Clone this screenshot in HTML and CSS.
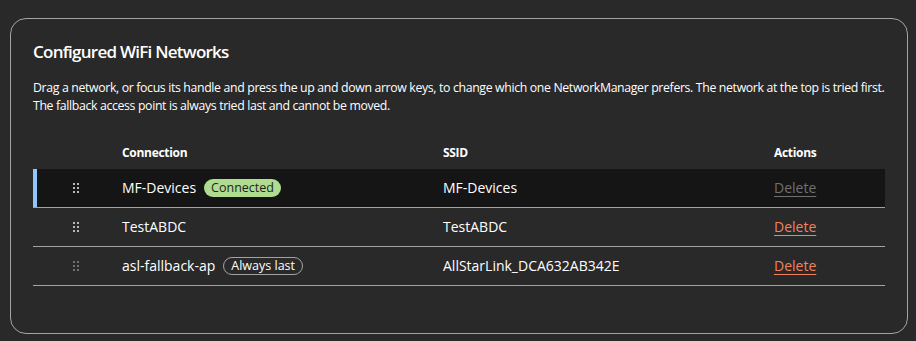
FILE: index.html
```html
<!DOCTYPE html>
<html lang="en">
	<head>
		<meta charset="UTF-8" />
		<meta name="viewport" content="width=device-width, initial-scale=1.0" />
		<title>Configured WiFi Networks</title>
		<link rel="stylesheet" href="styles.css">
	</head>

	<body>
		<div class="card">
			<h2 class="card-title">Configured WiFi Networks</h2>
			<p class="card-help">
				Drag a network, or focus its handle and press the up and down arrow keys, to change which one NetworkManager prefers. The network at the top is tried first.
				The fallback access point is always tried last and cannot be moved.
			</p>

			<div class="net-table">
				<div class="net-row net-head">
					<div></div>
					<div>Connection</div>
					<div>SSID</div>
					<div>Actions</div>
				</div>

				<div class="net-row is-active">
					<div class="handle-cell">
						<span class="handle"><i></i><i></i><i></i><i></i><i></i><i></i></span>
					</div>
					<div class="name-cell">MF-Devices <span class="badge badge-green">Connected</span></div>
					<div>MF-Devices</div>
					<div><a class="delete is-disabled">Delete</a></div>
				</div>

				<div class="net-row">
					<div class="handle-cell">
						<span class="handle"><i></i><i></i><i></i><i></i><i></i><i></i></span>
					</div>
					<div class="name-cell">TestABDC</div>
					<div>TestABDC</div>
					<div><a class="delete" href="#">Delete</a></div>
				</div>

				<div class="net-row">
					<div class="handle-cell">
						<span class="handle is-locked"><i></i><i></i><i></i><i></i><i></i><i></i></span>
					</div>
					<div class="name-cell">asl-fallback-ap <span class="badge badge-outline">Always last</span></div>
					<div>AllStarLink_DCA632AB342E</div>
					<div><a class="delete" href="#">Delete</a></div>
				</div>
			</div>
		</div>
	</body>
</html>
```

FILE: styles.css
```css
:root {
	--bg-color: #292929;
	--text-color: #ffffff;
	--border-color: #a3a3a3;
	--active-bg: #151515;
	--active-bar: #92c5f9;
	--green: #afdc8f;
	--danger: #f0835e;
	--disabled: #707070;
}

body {
	margin: 0;
	background-color: var(--bg-color);
	color: var(--text-color);
	font-family: "Open Sans", "Noto Sans", sans-serif;
	font-size: 13px;
}

.card {
	margin: 18px 8px 8px 10px;
	height: 316px;
	box-sizing: border-box;
	border: 1px solid var(--border-color);
	border-radius: 16px;
	padding: 21px 22px 0;
}

.card-title {
	margin: 0;
	font-size: 17px;
	line-height: 24px;
	font-weight: 600;
	letter-spacing: -0.75px;
}

.card-help {
	margin: 15px 0 0;
	font-size: 12.3px;
	line-height: 18px;
	letter-spacing: -0.35px;
}

.net-table {
	margin-top: 16px;
}

.net-row {
	display: grid;
	grid-template-columns: 89px 321px 331px 1fr;
	align-items: center;
	height: 38px;
	border-bottom: 1px solid var(--border-color);
	font-size: 14px;
}

.net-row > div {
	padding-bottom: 1px;
}

.net-head {
	border-bottom: none;
	font-weight: 700;
	font-size: 12px;
	letter-spacing: -0.3px;
}

.net-head > div {
	padding: 5px 0 0;
}

.net-row.is-active {
	background-color: var(--active-bg);
	box-shadow: inset 4px 0 0 var(--active-bar);
}

.handle-cell {
	padding-left: 40px;
	display: flex;
}

.handle {
	display: grid;
	grid-template-columns: 2px 2px;
	grid-auto-rows: 2px;
	gap: 2px 2px;
}

.handle i {
	background-color: #b8b8b8;
}

.handle.is-locked i {
	background-color: #707070;
}

.name-cell {
	display: flex;
	align-items: center;
	gap: 8px;
}

.badge {
	display: inline-flex;
	align-items: center;
	height: 18px;
	padding: 0 7px;
	border-radius: 9px;
	font-size: 12.5px;
	box-sizing: border-box;
}

.badge-green {
	background-color: var(--green);
	color: #1f1f1f;
}

.badge-outline {
	border: 1px solid var(--border-color);
	color: var(--text-color);
}

.delete {
	color: var(--danger);
	text-decoration: underline;
	text-underline-offset: 3px;
}

.delete.is-disabled {
	color: var(--disabled);
}
```
